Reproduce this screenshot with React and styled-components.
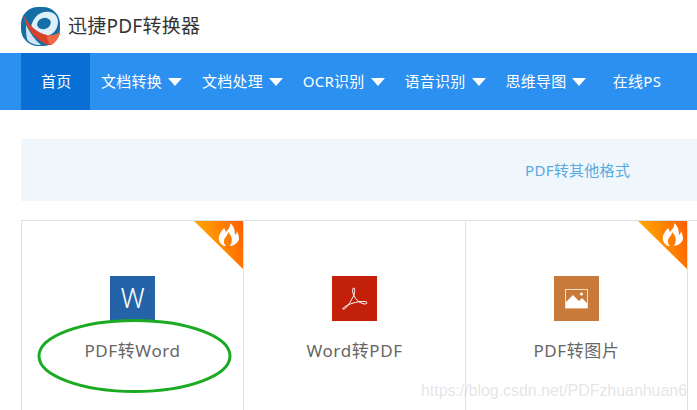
import React from 'react'
import styled, { createGlobalStyle } from 'styled-components'

const GlobalStyle = createGlobalStyle`
  html, body {
    margin: 0;
    padding: 0;
    background: #fff;
    overflow: hidden;
  }
  body {
    font-family: 'Noto Sans', 'Noto Sans CJK SC', sans-serif;
  }
`

const Page = styled.div`
  position: relative;
  width: 697px;
  height: 410px;
  overflow: hidden;
`

const Header = styled.header`
  display: flex;
  align-items: center;
  gap: 8px;
  height: 53px;
  padding-left: 21px;
  box-sizing: border-box;
`

const Title = styled.h1`
  margin: 0;
  font-size: 19px;
  font-weight: 400;
  letter-spacing: 0.25px;
  color: #333;
  line-height: 53px;
`

const Nav = styled.nav`
  display: flex;
  height: 57px;
  padding-left: 21px;
  background: #2b90f0;
`

const NavItem = styled.a`
  display: flex;
  align-items: center;
  gap: 6px;
  box-sizing: border-box;
  padding: ${p => (p.$active ? '0 18.5px 2px 20px' : p.$plain ? '0 0 2px 17.5px' : '0 8.9px 2px 11px')};
  background: ${p => (p.$active ? '#0870d4' : 'transparent')};
  color: #fff;
  font-size: 15px;
  letter-spacing: 0.25px;
  white-space: nowrap;
`

const Caret = styled.span`
  width: 0;
  height: 0;
  margin-top: 2px;
  border-left: 7.5px solid transparent;
  border-right: 7.5px solid transparent;
  border-top: 8px solid #fff;
`

const Main = styled.main`
  padding: 29px 0 0 21px;
`

const Banner = styled.div`
  display: flex;
  align-items: center;
  box-sizing: border-box;
  height: 62px;
  padding: 0 0 2px 504px;
  background: #eff7fd;
  color: #5aa9e0;
  font-size: 15px;
  letter-spacing: 0.3px;
`

const Grid = styled.div`
  display: flex;
  margin-top: 19px;
  border-top: 1px solid #d8e4e8;
  border-left: 1px solid #d8e4e8;
  height: 190px;
`

const Card = styled.div`
  position: relative;
  display: flex;
  flex-direction: column;
  align-items: center;
  width: 222px;
  box-sizing: border-box;
  padding-top: 55px;
  border-right: 1px solid #d8e4e8;
`

const IconBox = styled.div`
  display: flex;
  align-items: center;
  justify-content: center;
  width: 45px;
  height: 45px;
  background: ${p => p.$color};
  color: #fff;
  font-family: 'Roboto', sans-serif;
  font-size: 27px;
  font-weight: 300;
`

const CardLabel = styled.div`
  margin-top: 18px;
  font-size: 17px;
  letter-spacing: 0.6px;
  line-height: 24px;
  color: #666;
`

const Badge = styled.svg`
  position: absolute;
  top: 0;
  right: 0;
`

const Circle = styled.svg`
  position: absolute;
  left: 37px;
  top: 319px;
`

const Watermark = styled.div`
  position: absolute;
  left: 421px;
  top: 382px;
  font-family: 'Liberation Sans', sans-serif;
  font-size: 16px;
  letter-spacing: -0.05px;
  color: rgba(170, 170, 170, 0.32);
  white-space: nowrap;
`

function Logo() {
  return (
    <svg width="39" height="39" viewBox="0 0 39 39">
      <rect x="0" y="0" width="39" height="39" rx="17" fill="#156fa6" />
      <path d="M10 21C11 10 20 3 29 5C38 7 39 17 34 24C30 29 22 31 16 27" fill="#dff0f8" />
      <ellipse cx="23" cy="16.5" rx="7" ry="5.5" fill="#156fa6" transform="rotate(-20 23 16.5)" />
      <path d="M3 9C8 18 16 26 26 28C30 29 35 28 39 25C38 31 34 36 30 38C22 38 13 30 8 22C5 17 3 13 3 9Z" fill="#d8412a" />
      <path d="M26 28C30 29 35 28 39 25C38 31 34 36 30 38C27 36 26 32 26 28Z" fill="#ee6a45" />
      <path d="M5 18C9 26 14 33 20 38C13 38 8 36 6 32C5 28 5 22 5 18Z" fill="#cfe6f2" />
    </svg>
  )
}

function FireBadge({ id }) {
  return (
    <Badge width="49" height="48" viewBox="0 0 49 48">
      <defs>
        <linearGradient id={id} x1="0" y1="0.4" x2="1" y2="0.1">
          <stop offset="0" stopColor="#ffb000" />
          <stop offset="1" stopColor="#ff6000" />
        </linearGradient>
      </defs>
      <polygon points="0,0 49,0 49,48" fill={`url(#${id})`} />
      <path
        d="M36 2C37 6 34 8 32 11C31 9 31 8 30 7C27 11 24 14 25 19C26 23 29 25 32 25C30 23 29 20 31 17C32 15 34 14 34 11C37 14 39 18 37 23C36 24 36 25 35 25C40 25 44 22 45 18C45 15 44 12 43 10C43 12 42 13 41 14C41 9 40 5 36 2Z"
        fill="#fff"
      />
    </Badge>
  )
}

export default function App() {
  return (
    <Page>
      <GlobalStyle />
      <Header>
        <Logo />
        <Title>迅捷PDF转换器</Title>
      </Header>
      <Nav>
        <NavItem $active>首页</NavItem>
        <NavItem>文档转换<Caret /></NavItem>
        <NavItem>文档处理<Caret /></NavItem>
        <NavItem>OCR识别<Caret /></NavItem>
        <NavItem>语音识别<Caret /></NavItem>
        <NavItem>思维导图<Caret /></NavItem>
        <NavItem $plain>在线PS</NavItem>
      </Nav>
      <Main>
        <Banner>PDF转其他格式</Banner>
        <Grid>
          <Card>
            <FireBadge id="fire-a" />
            <IconBox $color="#2563a8">W</IconBox>
            <CardLabel>PDF转Word</CardLabel>
          </Card>
          <Card>
            <IconBox $color="#c22008">
              <svg width="26" height="24" viewBox="0 0 26 24" fill="none" stroke="#fff" strokeWidth="1">
                <path d="M1 22C4 23 9 14 12 8C13 4 13 0 11.5 1C10 2 10.5 6 12 9C14 13 18 16 22 17C26 17 26 15 23 14.5C18 14 9 16 4 19C1 21 0 22 1 22Z" />
              </svg>
            </IconBox>
            <CardLabel>Word转PDF</CardLabel>
          </Card>
          <Card>
            <FireBadge id="fire-b" />
            <IconBox $color="#c87a3a">
              <svg width="23" height="20" viewBox="0 0 23 20">
                <rect x="0.5" y="0.5" width="22" height="18.5" fill="none" stroke="#f5dfcb" />
                <path d="M1 19V13L8 6L14 12L17 9L22 14V19Z" fill="#fff" />
                <circle cx="16.5" cy="5" r="1.5" fill="#fff" />
              </svg>
            </IconBox>
            <CardLabel>PDF转图片</CardLabel>
          </Card>
        </Grid>
      </Main>
      <Circle width="195" height="74" viewBox="0 0 195 74">
        <ellipse cx="97.5" cy="37" rx="95.5" ry="35.5" fill="none" stroke="#1aab22" strokeWidth="3" />
      </Circle>
      <Watermark>https://blog.csdn.net/PDFzhuanhuan6</Watermark>
    </Page>
  )
}
